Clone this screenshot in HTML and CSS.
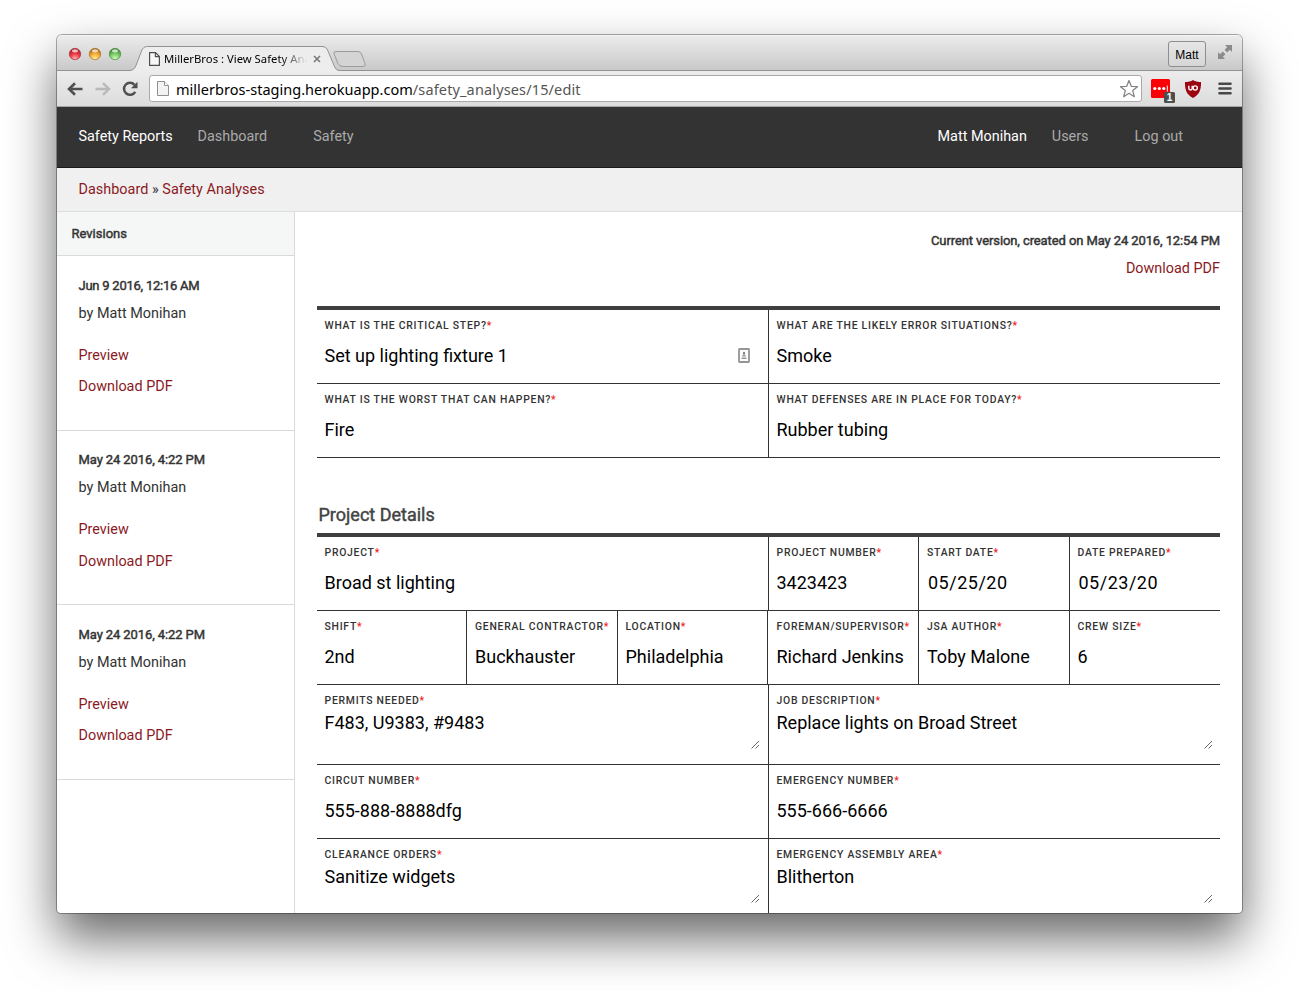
FILE: index.html
```html
<!DOCTYPE html>
<html lang="en">
<head>
<meta charset="utf-8">
<title>MillerBros : View Safety Analysis</title>
<link rel="stylesheet" href="styles.css">
</head>
<body>
<div class="window">
  <div class="tabstrip">
    <svg class="lights" width="54" height="16" viewBox="0 0 54 16">
      <defs>
        <radialGradient id="r" cx=".5" cy=".9" r=".85"><stop offset="0" stop-color="#ffb0b0"/><stop offset=".5" stop-color="#f03a48"/><stop offset="1" stop-color="#a01a24"/></radialGradient>
        <radialGradient id="y" cx=".5" cy=".9" r=".85"><stop offset="0" stop-color="#fff09a"/><stop offset=".5" stop-color="#f8ae38"/><stop offset="1" stop-color="#a06414"/></radialGradient>
        <radialGradient id="g" cx=".5" cy=".9" r=".85"><stop offset="0" stop-color="#d6fbb8"/><stop offset=".5" stop-color="#78ce68"/><stop offset="1" stop-color="#35802c"/></radialGradient>
      </defs>
      <circle cx="7" cy="8" r="5.7" fill="url(#r)" stroke="#a3333a" stroke-width=".7"/>
      <circle cx="27" cy="8" r="5.7" fill="url(#y)" stroke="#a8702a" stroke-width=".7"/>
      <circle cx="47" cy="8" r="5.7" fill="url(#g)" stroke="#4d8a42" stroke-width=".7"/>
      <g fill="#fff" opacity=".7"><ellipse cx="7" cy="4.800" rx="3" ry="1.600"/><ellipse cx="27" cy="4.800" rx="3" ry="1.600"/><ellipse cx="47" cy="4.800" rx="3" ry="1.600"/></g>
    </svg>
    <div class="tab">
      <svg class="tab-shape" width="236" height="26" viewBox="0 0 236 26">
        <path d="M-2 24.500C2 24.500 3.500 23 5 19.500L10.500 5Q12 .5 16.500 .5H191Q195.500 .5 197 5L203 19.500C204.500 23 205.500 24.500 209 24.500L209 26H-2Z" fill="#ededed"/>
        <path d="M-2 24.500C2 24.500 3.500 23 5 19.500L10.500 5Q12 .5 16.500 .5H191Q195.500 .5 197 5L203 19.500C204.500 23 205.500 24.500 209 24.500" fill="none" stroke="#929292"/>
        <path d="M205 5.500H227Q229.500 5.500 230.500 8L234 17.500Q235 20.500 232 20.500H212Q208.500 20.500 207 17.500L203 8Q202 5.500 205 5.500Z" fill="#d4d4d4" stroke="#9b9b9b"/>
      </svg>
      <svg class="tab-page" width="11" height="14" viewBox="0 0 11 14"><path d="M.6.6H6.500L10.400 4.500V13.400H.6Z" fill="#f8f8f8" stroke="#4f4f4f" stroke-width="1.200"/><path d="M6.400.6V4.600H10.400" fill="none" stroke="#4f4f4f" stroke-width="1.200"/></svg>
      <span class="tab-title">MillerBros : View Safety Ana</span>
      <svg class="tab-close" width="8" height="8" viewBox="0 0 8 8"><path d="M1 1L7 7M7 1L1 7" stroke="#777" stroke-width="1.600"/></svg>
    </div>
    <div class="strip-right">
      <span class="user-btn">Matt</span>
      <svg width="16" height="16" viewBox="0 0 16 16" fill="#8b8b8b"><path d="M8 1H15V8L12.800 5.800L10.200 8.400L7.600 5.800L10.200 3.200Z"/><path d="M1 8V15H8L5.800 12.800L8.400 10.200L5.800 7.600L3.200 10.200Z"/></svg>
    </div>
  </div>
  <div class="toolbar">
    <svg class="arrow" width="16" height="14" viewBox="0 0 16 14"><path d="M8 1.200L2 7L8 12.800M2.500 7H15.500" fill="none" stroke="#505050" stroke-width="2.600"/></svg>
    <svg class="arrow" width="16" height="14" viewBox="0 0 16 14"><path d="M8 1.200L14 7L8 12.800M13.500 7H.5" fill="none" stroke="#b9b9b9" stroke-width="2.400"/></svg>
    <svg class="reload" width="17" height="16" viewBox="0 0 17 16"><path d="M13.200 10.800A6 6 0 1 1 12.500 3.800" fill="none" stroke="#505050" stroke-width="2.500"/><path d="M15.500.8V7.300H9Z" fill="#505050"/></svg>
    <div class="omnibox">
      <svg width="12" height="15" viewBox="0 0 12 15"><path d="M.5.5H7.500L11.500 4.500V14.500H.5Z" fill="#f3f3f3" stroke="#909090"/><path d="M7.500.5V4.500H11.500" fill="#fff" stroke="#909090"/></svg>
      <span class="url"><span class="host">millerbros-staging.herokuapp.com</span><span class="path">/safety_analyses/15/edit</span></span>
      <svg class="star" width="20" height="20" viewBox="0 0 20 20"><path d="M10 1.500L12.300 7.300L18.500 7.700L13.700 11.600L15.300 17.700L10 14.300L4.700 17.700L6.300 11.600L1.500 7.700L7.700 7.300Z" fill="#fff" stroke="#858585" stroke-width="1.300" stroke-linejoin="round"/></svg>
    </div>
    <div class="ext">
      <svg width="26" height="26" viewBox="0 0 26 26"><rect x="0" y="2" width="19" height="19" rx="1.500" fill="#fb0007"/><g fill="#fff"><circle cx="3.800" cy="11.500" r="1.600"/><circle cx="8.300" cy="11.500" r="1.600"/><circle cx="12.800" cy="11.500" r="1.600"/><rect x="15.800" y="8.500" width="1" height="6"/></g><rect x="13" y="15" width="11" height="11" rx="1.500" fill="#4e4e4e"/></svg>
      <span class="badge">1</span>
    </div>
    <svg class="shield" width="18" height="20" viewBox="0 0 18 20"><path d="M9 1C11 2.500 14 3 17 3C17.300 11 15 16 9 19C3 16 .7 11 1 3C4 3 7 2.500 9 1Z" fill="#9c0610"/><path d="M4.800 6.800V9.300Q4.800 11 6.500 11Q8.200 11 8.200 9.300V6.800" fill="none" stroke="#fff" stroke-width="1.400"/><circle cx="11.200" cy="9" r="2.100" fill="none" stroke="#fff" stroke-width="1.400"/></svg>
    <svg class="menu" width="14" height="13" viewBox="0 0 14 13"><path d="M1.500 1.800H12.500M1.500 6.500H12.500M1.500 11.200H12.500" stroke="#484848" stroke-width="2.600" stroke-linecap="round"/></svg>
  </div>
  <nav class="nav">
    <span class="strong">Safety Reports</span><a class="n-dash">Dashboard</a><a class="n-safety">Safety</a>
    <span class="strong n-name">Matt Monihan</span><a class="n-users">Users</a><a class="n-out">Log out</a>
  </nav>
  <div class="crumbs"><a>Dashboard</a> » <a>Safety Analyses</a></div>
  <div class="body">
    <aside class="side">
      <h2>Revisions</h2>
      <section class="rev"><b class="tight">Jun 9 2016, 12:16 AM</b><span>by Matt Monihan</span><a class="prev">Preview</a><a>Download PDF</a></section>
      <section class="rev short"><b>May 24 2016, 4:22 PM</b><span>by Matt Monihan</span><a class="prev">Preview</a><a>Download PDF</a></section>
      <section class="rev"><b>May 24 2016, 4:22 PM</b><span>by Matt Monihan</span><a class="prev">Preview</a><a>Download PDF</a></section>
    </aside>
    <main class="main">
      <div class="version"><b>Current version, created on May 24 2016, 12:54 PM</b><a>Download PDF</a></div>
      <div class="table">
        <div class="row two">
          <div class="cell"><label>What is the critical step?<i>*</i></label><div class="val">Set up lighting fixture 1<svg class="card" width="12" height="15" viewBox="0 0 12 15"><rect x="1" y="1" width="10" height="13" rx=".5" fill="#fff" stroke="#959595" stroke-width="1.800"/><circle cx="6" cy="5" r="1.200" fill="#888"/><path d="M4.200 8.500Q4.200 6 6 6Q7.800 6 7.800 8.500ZM3.500 9.500H8.500V11H3.500Z" fill="#999"/></svg></div></div>
          <div class="cell"><label>What are the likely error situations?<i>*</i></label><div class="val">Smoke</div></div>
        </div>
        <div class="row two">
          <div class="cell"><label>What is the worst that can happen?<i>*</i></label><div class="val">Fire</div></div>
          <div class="cell"><label>What defenses are in place for today?<i>*</i></label><div class="val">Rubber tubing</div></div>
        </div>
      </div>
      <h3>Project Details</h3>
      <div class="table">
        <div class="row four">
          <div class="cell"><label>Project<i>*</i></label><div class="val">Broad st lighting</div></div>
          <div class="cell"><label>Project number<i>*</i></label><div class="val">3423423</div></div>
          <div class="cell"><label>Start date<i>*</i></label><div class="val date">05/25/20</div></div>
          <div class="cell"><label>Date prepared<i>*</i></label><div class="val date">05/23/20</div></div>
        </div>
        <div class="row six">
          <div class="cell"><label>Shift<i>*</i></label><div class="val">2nd</div></div>
          <div class="cell"><label>General contractor<i>*</i></label><div class="val">Buckhauster</div></div>
          <div class="cell"><label>Location<i>*</i></label><div class="val">Philadelphia</div></div>
          <div class="cell"><label>Foreman/Supervisor<i>*</i></label><div class="val">Richard Jenkins</div></div>
          <div class="cell"><label>JSA author<i>*</i></label><div class="val">Toby Malone</div></div>
          <div class="cell"><label>Crew size<i>*</i></label><div class="val">6</div></div>
        </div>
        <div class="row two area">
          <div class="cell"><label>Permits needed<i>*</i></label><div class="val">F483, U9383, #9483<svg class="grip" width="9" height="9" viewBox="0 0 9 9"><path d="M.5 8.500L8 1M4.500 8.500L8 5" stroke="#555" stroke-width=".9"/></svg></div></div>
          <div class="cell"><label>Job description<i>*</i></label><div class="val">Replace lights on Broad Street<svg class="grip" width="9" height="9" viewBox="0 0 9 9"><path d="M.5 8.500L8 1M4.500 8.500L8 5" stroke="#555" stroke-width=".9"/></svg></div></div>
        </div>
        <div class="row two">
          <div class="cell"><label>Circut number<i>*</i></label><div class="val">555-888-8888dfg</div></div>
          <div class="cell"><label>Emergency number<i>*</i></label><div class="val">555-666-6666</div></div>
        </div>
        <div class="row two area">
          <div class="cell"><label>Clearance orders<i>*</i></label><div class="val">Sanitize widgets<svg class="grip" width="9" height="9" viewBox="0 0 9 9"><path d="M.5 8.500L8 1M4.500 8.500L8 5" stroke="#555" stroke-width=".9"/></svg></div></div>
          <div class="cell"><label>Emergency assembly area<i>*</i></label><div class="val">Blitherton<svg class="grip" width="9" height="9" viewBox="0 0 9 9"><path d="M.5 8.500L8 1M4.500 8.500L8 5" stroke="#555" stroke-width=".9"/></svg></div></div>
        </div>
      </div>
    </main>
  </div>
</div>
</body>
</html>
```
FILE: styles.css
```css
* { box-sizing: border-box; }
body { margin: 0; padding: 35px 0 0 57px; background: #fff; height: 992px; overflow: hidden; font-family: Roboto, sans-serif; font-size: 14.4px; color: #333; }
.window { width: 1185px; height: 878px; border-radius: 5px 5px 4px 4px; overflow: hidden; background: #fff; display: flex; flex-direction: column; box-shadow: 0 0 0 1px rgba(0,0,0,.32), 0 25px 50px rgba(0,0,0,.6); }
svg { display: block; flex: none; }

.tabstrip { height: 36px; flex: none; display: flex; background: linear-gradient(#ebebeb, #c9c9c9); border-bottom: 1px solid #929292; border-top: 1px solid #f5f5f5; }
.lights { margin: 10px 0 0 11px; }
.tab { position: relative; margin: 10px 0 -1px 9px; width: 236px; height: 26px; display: flex; align-items: center; padding-left: 18px; }
.tab-shape { position: absolute; left: 0; top: 0; overflow: visible; }
.tab-page, .tab-title, .tab-close { position: relative; }
.tab-title { margin-left: 4px; width: 146px; white-space: nowrap; font: 11.3px/16px "Noto Sans", sans-serif; color: #000; -webkit-mask-image: linear-gradient(90deg, #000 80%, transparent 98%); mask-image: linear-gradient(90deg, #000 80%, transparent 98%); }
.tab-close { margin-left: 3px; }
.strip-right { margin-left: auto; display: flex; align-items: flex-start; gap: 11px; padding: 5px 9px 0 0; }
.strip-right svg { margin-top: 3px; }
.user-btn { width: 38px; height: 26px; border: 1px solid #8e8e8e; border-radius: 3px; background: linear-gradient(#e6e6e6, #d6d6d6); color: #000; font: 12px/26px "Liberation Sans", sans-serif; text-align: center; }

.toolbar { height: 36px; flex: none; display: flex; align-items: center; background: linear-gradient(#ececec, #dcdcdc); border-bottom: 1px solid #a5a5a5; padding-left: 10px; }
.arrow { margin-right: 12px; }
.reload { margin-left: -1px; }
.omnibox { margin-left: 10px; width: 993px; height: 27px; background: #fff; border: 1px solid #a9a9a9; border-radius: 3px; display: flex; align-items: center; padding: 0 2px 0 7px; }
.url { margin-left: 7px; flex: 1; font: 14.5px/24px "Noto Sans", sans-serif; color: #000; letter-spacing: .02px; }
.path { color: #555; letter-spacing: .14px; }
.ext { position: relative; margin-left: 9px; margin-top: 2px; }
.badge { position: absolute; left: 13px; top: 15px; width: 11px; text-align: center; font: bold 10px/11px "Liberation Sans", sans-serif; color: #fff; }
.shield { margin-left: 6.5px; }
.menu { margin-left: 16px; }

.nav { height: 61px; flex: none; background: #333; border-bottom: 1px solid #1c1a1c; display: flex; align-items: center; padding: 0 59px 2px 21.5px; color: #aaa; }
.strong { color: #fff; }
.n-dash { margin-left: 25px; }
.n-safety { margin-left: 46px; }
.n-name { margin-left: auto; }
.n-users { margin-left: 25px; }
.n-out { margin-left: 46px; }
.crumbs { height: 44px; flex: none; background: #f0f0f0; border-bottom: 1px solid #ddd; padding-left: 21.5px; line-height: 43px; letter-spacing: .03px; }
.crumbs a, .rev a, .version a { color: #8b1a1e; }

.body { display: flex; flex: 1; min-height: 0; }
.side { width: 238px; flex: none; border-right: 1px solid #d9dada; }
h2 { margin: 0; height: 44px; background: #f5f7f6; border-bottom: 1px solid #d9dada; padding-left: 14.5px; font-size: 13px; font-weight: 400; line-height: 43px; }
h2, b, h3 { -webkit-text-stroke: .45px currentColor; }
b { font-weight: 400; font-size: 13px; letter-spacing: -.1px; }
.tight { letter-spacing: -.24px; }
.rev { height: 175px; border-bottom: 1px solid #d9dada; padding: 16px 0 0 21.5px; display: flex; flex-direction: column; line-height: 28px; }
.rev.short { height: 174px; padding-top: 15px; }
.rev .prev { margin-top: 14px; margin-bottom: 3px; }
.rev.short .prev { margin-bottom: 4px; }
.main { flex: 1; padding: 15px 22px 0; }
.version { height: 79px; display: flex; flex-direction: column; align-items: flex-end; line-height: 28px; }
.table { border-top: 4px solid #3f3f3f; }
.row { display: grid; height: 74px; border-bottom: 1px solid #333; }
.row.area { height: 80px; }
.two { grid-template-columns: 452px 451px; }
.four { grid-template-columns: 452px 150px 151px 150px; }
.six { grid-template-columns: 150px 151px 150px 151px 151px 150px; }
.cell { border-right: 1px solid #333; padding: 8px 0 0 7.5px; white-space: nowrap; }
.cell:last-child { border-right: 0; }
.four .cell:nth-child(3), .six .cell:nth-child(2), .six .cell:nth-child(5) { padding-left: 8px; }
.six .cell:nth-child(4) { padding-left: 8.5px; }
label { display: block; height: 15px; line-height: 15px; font-size: 10.4px; font-weight: 500; letter-spacing: .75px; text-transform: uppercase; }
label i { color: #f0221a; font-style: normal; }
.val { position: relative; display: flex; align-items: center; height: 30px; margin-top: 7px; font-size: 18px; color: #000; }
.area .val { margin-top: -1px; }
.card { position: absolute; right: 18px; top: 8px; }
.grip { position: absolute; right: 8px; top: 33px; }
.cell:last-child .grip { right: 7px; }
.date { padding-left: 1px; letter-spacing: .5px; }
h3 { margin: 0; height: 75px; padding: 45px 0 0 1.5px; font-size: 18px; line-height: 24px; font-weight: 400; color: #444; }
```
